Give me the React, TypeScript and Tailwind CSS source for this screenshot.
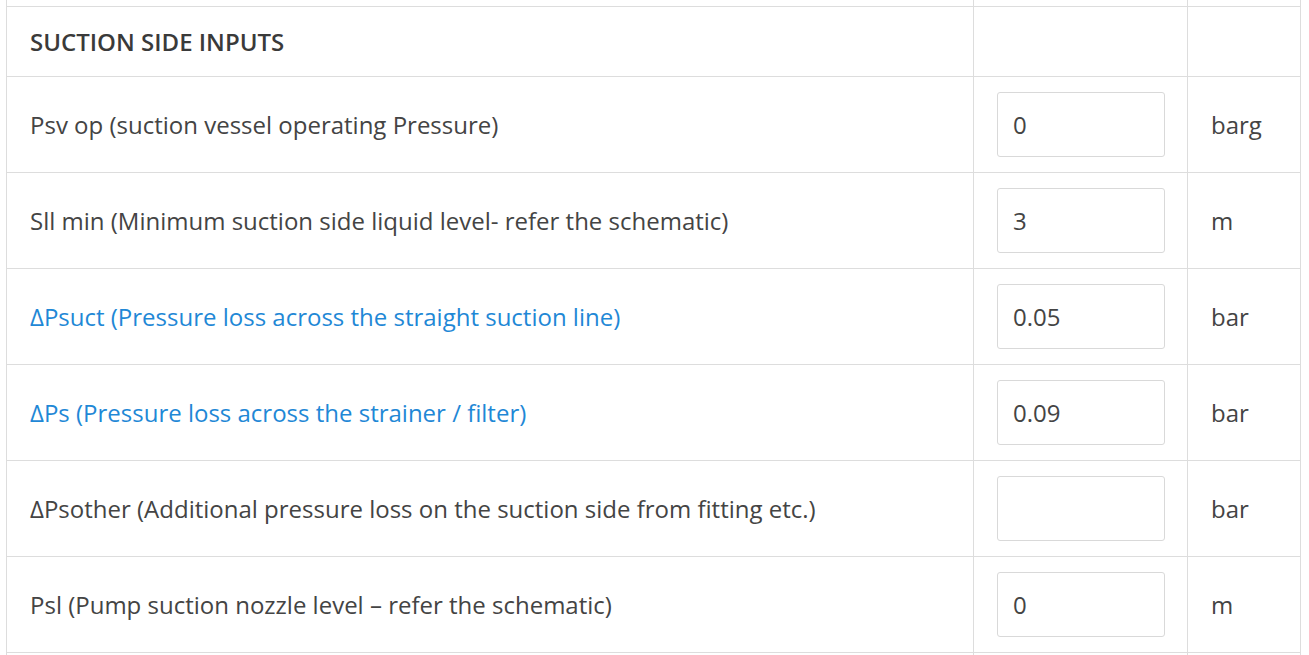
const rows = [
  { label: "Psv op (suction vessel operating Pressure)", value: "0", unit: "barg", link: false },
  { label: "Sll min (Minimum suction side liquid level- refer the schematic)", value: "3", unit: "m", link: false },
  { label: "ΔPsuct (Pressure loss across the straight suction line)", value: "0.05", unit: "bar", link: true },
  { label: "ΔPs (Pressure loss across the strainer / filter)", value: "0.09", unit: "bar", link: true },
  { label: "ΔPsother (Additional pressure loss on the suction side from fitting etc.)", value: "", unit: "bar", link: false },
  { label: "Psl (Pump suction nozzle level – refer the schematic)", value: "0", unit: "m", link: false },
];

function Row({ h, children }: { h: string; children?: React.ReactNode[] }) {
  return (
    <div className={`flex ${h} border-b border-[#dddddd]`}>
      <div className="w-[967px] border-r border-[#dddddd] flex items-center pl-[23px]">{children?.[0]}</div>
      <div className="w-[214px] border-r border-[#dddddd] flex items-center pl-[23px]">{children?.[1]}</div>
      <div className="w-[113px] border-r border-[#dddddd] flex items-center pl-[23px]">{children?.[2]}</div>
    </div>
  );
}

export default function App() {
  return (
    <div className="h-[655px] overflow-hidden bg-white text-[24px] text-[#444444] font-['Open_Sans',sans-serif]">
      <div className="ml-[6px] w-[1295px] border-l border-[#dddddd]">
        <Row h="h-[7px]" />
        <Row h="h-[70px]">
          {[
            <span key="a" className="font-semibold text-[#3a3a3a]">SUCTION SIDE INPUTS</span>,
            null,
            null,
          ]}
        </Row>
        {rows.map((r) => (
          <Row key={r.label} h="h-[96px]">
            {[
              <span key="a" className={r.link ? "text-[#1f88d6]" : ""}>{r.label}</span>,
              <input
                key="b"
                defaultValue={r.value}
                className="w-[168px] h-[65px] border border-[#d9d9d9] rounded-[3px] pl-[15px] text-[24px] text-[#444444] outline-none bg-white"
              />,
              <span key="c">{r.unit}</span>,
            ]}
          </Row>
        ))}
        <Row h="h-[20px]" />
      </div>
    </div>
  );
}
